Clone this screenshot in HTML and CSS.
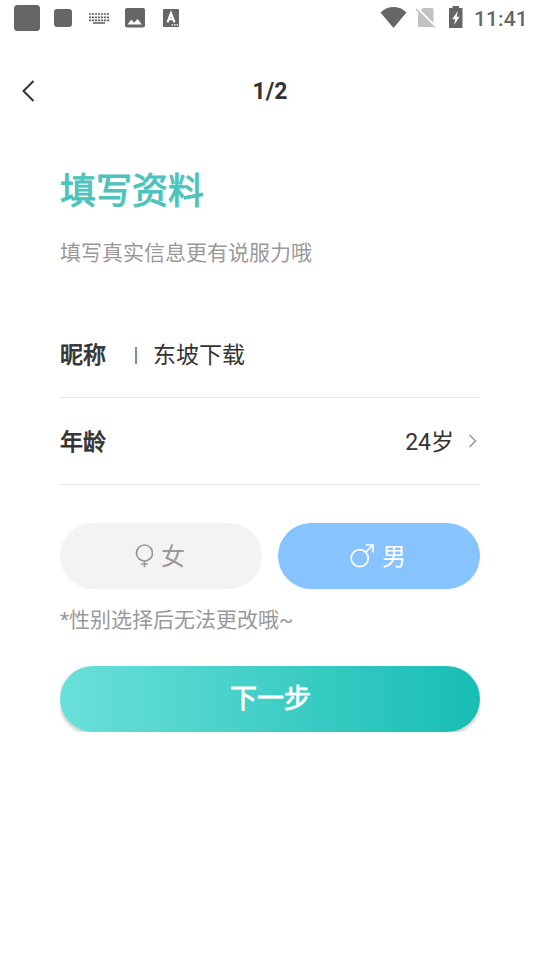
FILE: index.html
```html
<!DOCTYPE html>
<html lang="zh-CN">
<head>
<meta charset="utf-8">
<title>填写资料</title>
<link rel="stylesheet" href="styles.css">
</head>
<body>
<div class="status">
  <svg class="status-icons" width="200" height="36" viewBox="0 0 200 36" fill="#666">
    <rect x="14" y="5" width="26" height="26" rx="3.5"/>
    <rect x="54" y="9" width="18" height="18" rx="3"/>
    <g fill="none" stroke="#666">
      <path stroke-dasharray="2.200 .800" stroke-width="1.700" d="M89 14h20.500M89 17.300h20M89 20.300h20.500"/>
      <path d="M93 23h12" stroke-width="1.600"/>
    </g>
    <path fill-rule="evenodd" d="M127 8h16a2 2 0 0 1 2 2v15.500a2 2 0 0 1-2 2h-16a2 2 0 0 1-2-2V10a2 2 0 0 1 2-2zM127.500 24.500h14.500l-4.500-5.500-3.500 3.700-2.700-3.200z"/>
    <rect x="163" y="9" width="16" height="18" rx="1"/>
    <path fill="none" stroke="#fff" stroke-width="2.200" d="M167.500 22.300l3.500-9 3.500 9M168.700 19.200h4.600"/>
    <path fill="none" stroke="#fff" stroke-width="1.300" stroke-dasharray="1.600 .9" d="M171.500 24.800h7"/>
  </svg>
  <svg class="signal-icons" width="90" height="36" viewBox="380 0 90 36">
    <path fill="#666" d="M380.500 12.500c8-7.300 18-7.300 26 0L393.500 28z"/>
    <path fill="#c2c2c2" d="M423 8h9q1.500 0 1.500 1.500v17.500h-15.500V12.500z"/>
    <path stroke="#fff" stroke-width="3" d="M416 7.500l20 20"/>
    <path stroke="#c2c2c2" stroke-width="1.700" d="M416 9l18.500 18.500"/>
    <path fill="#666" d="M452.500 6h6.500v2h3.500v20H449V8h3.500z"/>
    <path fill="#fff" d="M457.800 11l-5.600 8.200h3.100L454.100 25l5.500-8.200h-3z"/>
  </svg>
  <span class="clock">11:41</span>
</div>
<header class="nav">
  <svg class="back" width="16" height="24" viewBox="0 0 16 24" fill="none" stroke="#333" stroke-width="2"><path d="M13.500 2L3.500 12l10 10"/></svg>
  <span class="step">1/2</span>
</header>
<main class="content">
  <h1 class="title">填写资料</h1>
  <p class="subtitle">填写真实信息更有说服力哦</p>
  <div class="row">
    <span class="label">昵称</span>
    <span class="divider">|</span>
    <span class="value">东坡下载</span>
  </div>
  <div class="row">
    <span class="label">年龄</span>
    <span class="value age">24岁</span>
    <svg class="arrow" width="12" height="16" viewBox="0 0 12 16" fill="none" stroke="#999" stroke-width="1.500"><path d="M2.500 2l6 6-6 6"/></svg>
  </div>
  <div class="genders">
    <div class="gender female">
      <svg width="18" height="24" viewBox="0 0 18 24" fill="none" stroke="#999" stroke-width="1.700"><circle cx="9.500" cy="9" r="8"/><path d="M9.500 17v6.200M6 20h7"/></svg>
      <span>女</span>
    </div>
    <div class="gender male">
      <svg width="24" height="24" viewBox="0 0 24 24" fill="none" stroke="#fff" stroke-width="1.700"><circle cx="9.700" cy="14.200" r="8.500"/><path d="M15.700 8.200L23 1M15.500 1H23v7.500"/></svg>
      <span>男</span>
    </div>
  </div>
  <p class="note">*性别选择后无法更改哦~</p>
  <div class="submit-clip"><div class="submit">下一步</div></div>
</main>
</body>
</html>
```
FILE: styles.css
```css
* { box-sizing: border-box; }
body {
  margin: 0;
  background: #fff;
  color: #333;
  font-family: Roboto, "Noto Sans CJK SC", sans-serif;
}
h1, p { margin: 0; }
svg { display: block; flex: none; }
.status {
  height: 36px;
  display: flex;
  align-items: center;
}
.signal-icons { margin-left: 180px; }
.clock {
  margin: 1px 0 0 4px;
  font-size: 21px;
  font-weight: 500;
  line-height: 36px;
  letter-spacing: .1px;
  color: #666;
  white-space: nowrap;
}
.nav {
  height: 110px;
  display: grid;
  grid-template-columns: 40px 1fr 40px;
  align-items: center;
}
.back { margin-left: 20px; }
.step {
  text-align: center;
  font-size: 23px;
  font-weight: 700;
}
.content { padding: 21px 60px 0; }
.title {
  font-size: 36px;
  line-height: 50px;
  font-weight: 400;
  -webkit-text-stroke: 1px #4cc3bc;
  color: #4cc3bc;
}
.subtitle {
  margin-top: 21px;
  font-size: 21px;
  line-height: 30px;
  color: #999;
  margin-bottom: 43px;
}
.row {
  height: 87px;
  display: flex;
  align-items: center;
  border-bottom: 1px solid #e6e6e6;
  font-size: 23px;
  line-height: 34px;
}
.label, .value { padding-top: 4px; }
.label { -webkit-text-stroke: .8px #333; }
.divider {
  width: 10px;
  margin: 2px 12px 0 25px;
  text-align: center;
  font-size: 20px;
  color: #666;
}
.age { margin-left: auto; }
.arrow { margin: 0 1px 0 13px; }
.genders {
  display: grid;
  grid-template-columns: 1fr 1fr;
  gap: 16px;
  margin-top: 38px;
}
.gender {
  height: 66px;
  border-radius: 33px;
  display: flex;
  align-items: center;
  justify-content: center;
  gap: 8px;
  font-size: 24px;
  line-height: 36px;
}
.gender span { padding-top: 2px; }
.gender svg { margin-bottom: 1px; }
.female { background: #f3f3f3; color: #999; padding-right: 2px; }
.male { background: #87c3ff; color: #fff; padding-right: 2px; }
.note {
  margin-top: 16px;
  font-size: 21px;
  line-height: 30px;
  color: #999;
}
.submit-clip {
  margin-top: 31px;
  overflow: hidden;
}
.submit {
  height: 66px;
  border-radius: 33px;
  background: linear-gradient(90deg, #6ae0d9, #17bdb4);
  box-shadow: 0 2px 4px rgba(0, 0, 0, .25);
  color: #fff;
  font-size: 27px;
  -webkit-text-stroke: .8px #fff;
  line-height: 67px;
  padding-left: 1px;
  text-align: center;
}
```
